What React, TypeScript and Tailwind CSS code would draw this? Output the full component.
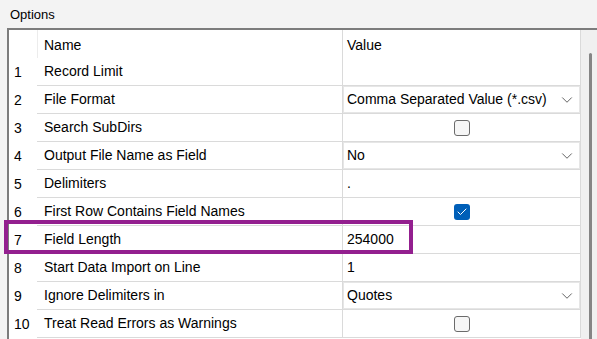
import { ChevronDown, Check } from 'lucide-react';

type Row = {
  n: number;
  name: string;
  kind: 'text' | 'select' | 'check';
  value?: string;
  checked?: boolean;
};

const rows: Row[] = [
  { n: 1, name: 'Record Limit', kind: 'text', value: '' },
  { n: 2, name: 'File Format', kind: 'select', value: 'Comma Separated Value (*.csv)' },
  { n: 3, name: 'Search SubDirs', kind: 'check', checked: false },
  { n: 4, name: 'Output File Name as Field', kind: 'select', value: 'No' },
  { n: 5, name: 'Delimiters', kind: 'text', value: '.' },
  { n: 6, name: 'First Row Contains Field Names', kind: 'check', checked: true },
  { n: 7, name: 'Field Length', kind: 'text', value: '254000' },
  { n: 8, name: 'Start Data Import on Line', kind: 'text', value: '1' },
  { n: 9, name: 'Ignore Delimiters in', kind: 'select', value: 'Quotes' },
  { n: 10, name: 'Treat Read Errors as Warnings', kind: 'check', checked: false },
];

const ValueCell = ({ row }: { row: Row }) => {
  if (row.kind === 'select') {
    return (
      <div className="flex h-full items-center justify-between border border-[#e6e6e6] bg-white pl-[3px] pr-[3px]">
        <span>{row.value}</span>
        <ChevronDown className="h-[18px] w-[18px] text-[#606060]" strokeWidth={1.3} />
      </div>
    );
  }
  if (row.kind === 'check') {
    return (
      <div className="flex h-full items-center justify-center">
        {row.checked ? (
          <div className="flex h-[16px] w-[16px] items-center justify-center rounded-[3px] bg-[#005fb8]">
            <Check className="h-3 w-3 text-white" strokeWidth={2} />
          </div>
        ) : (
          <div className="h-[16px] w-[16px] rounded-[3px] border border-[#6b6b6b] bg-[#f6f6f6]" />
        )}
      </div>
    );
  }
  return <div className="flex h-full items-center pl-[4px]">{row.value}</div>;
};

export default function App() {
  return (
    <div
      className="relative h-[339px] w-[597px] overflow-hidden bg-[#f3f3f3] text-[14px] text-black"
      style={{ fontFamily: '"Liberation Sans", Arial, sans-serif' }}
    >
      <div className="h-[28px] pl-[10px] pt-[7px] text-[13px] leading-[16px]">Options</div>

      <div className="ml-[7px] flex border-l-2 border-t-2 border-[#7c7c7c]">
        <div className="w-[572px] bg-white">
          {/* header */}
          <div className="flex h-[28px]">
            <div className="w-[28px]" />
            <div className="flex w-[305px] items-center border-l border-[#ececec] pl-[6px] pt-[2px]">Name</div>
            <div className="flex w-[239px] items-center border-l border-r border-[#dadada] pl-[4px] pt-[2px]">Value</div>
          </div>

          {rows.map((row) => (
            <div key={row.n} className="flex h-[28px]">
              <div className="flex w-[28px] items-center pl-[5px]">{row.n}</div>
              <div className="flex w-[305px] items-center border-b border-[#dadada] pl-[7px]">{row.name}</div>
              <div className="w-[239px] border-b border-l border-r border-[#dadada]">
                <ValueCell row={row} />
              </div>
            </div>
          ))}
        </div>

        <div className="flex w-[16px] justify-center bg-[#f0f0f0] pl-[3px] pt-[23px]">
          <div className="h-[300px] w-[3px] rounded-t-full bg-[#858585]" />
        </div>
      </div>

      {/* highlight */}
      <div className="absolute left-[4px] top-[220px] h-[34px] w-[409px] border-4 border-[#931f8f]" />
    </div>
  );
}
